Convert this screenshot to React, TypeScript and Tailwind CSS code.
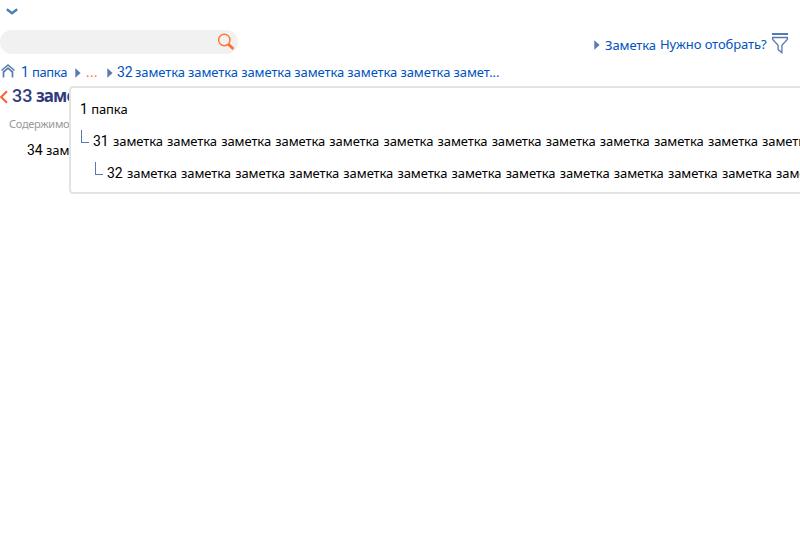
import React from "react";

const words = (n: number) => Array(n).fill("заметка").join(" ");

function Num({ children }: { children: React.ReactNode }) {
  return <span className="font-['Roboto',sans-serif] text-[14px] leading-[14px] tracking-normal">{children}</span>;
}

function Arrow() {
  return (
    <svg className="block shrink-0" width="6" height="10" viewBox="0 0 6 10">
      <path d="M0.3 0.3v9.4L5.6 5z" fill="#587ab0" />
    </svg>
  );
}

function Branch() {
  return <span className="mb-[9px] block h-[13px] w-[8px] shrink-0 border-b border-l border-[#587ab0]" />;
}

export default function App() {
  return (
    <div className="relative h-[550px] w-[800px] overflow-hidden bg-white font-['Noto_Sans',sans-serif] text-[13px] tracking-[-0.1px] whitespace-nowrap text-black">
      <div className="flex h-[30px] pt-[8px] pl-[6px]">
        <svg width="12" height="7" viewBox="0 0 12 7" fill="none">
          <path d="M0.8 1.2L6 5.3l5.2-4.1" stroke="#4a7fb8" strokeWidth="2.4" />
        </svg>
      </div>

      <div className="flex h-[32px] justify-between">
        <div className="flex h-[24px] w-[238px] items-start justify-end rounded-full bg-[#f1f1f1] pt-[3px] pr-[3px]">
          <svg width="18" height="18" viewBox="0 0 18 18" fill="none" stroke="#ff6d38">
            <circle cx="7.3" cy="7" r="5.7" stroke="#ff7434" strokeWidth="1.4" />
            <path d="M11.2 11l5.2 5" strokeWidth="2.8" />
          </svg>
        </div>
        <div className="flex h-[30px] items-center pr-[12px] text-[#0053bf]">
          <Arrow />
          <span className="relative top-px ml-[5px] w-[55px]">Заметка</span>
          <span className="w-[112px]">Нужно отобрать?</span>
          <svg className="-mt-[3px] shrink-0" width="16" height="21" viewBox="0 0 16 21" fill="none" stroke="#587ab0">
            <path d="M0 1h16" strokeWidth="2" />
            <path d="M0 4.5h16M0.7 5v1.5l5.4 5.7v4.4l3.8 3v-7.4l5.4-5.7V5" strokeWidth="1.3" />
          </svg>
        </div>
      </div>

      <div className="flex h-[21px] items-center text-[#0053bf]">
        <svg className="-mt-[4px] ml-px shrink-0" width="14" height="14" viewBox="0 0 14 14" fill="none" stroke="#587ab0" strokeWidth="1.5">
          <path d="M0.5 6.5L7 1l6.5 5.5" />
          <path d="M2.5 13.5V8L7 4.2 11.5 8v5.5" strokeWidth="1.7" />
        </svg>
        <span className="ml-[6px] w-[54px] tracking-[-0.35px]"><Num>1</Num> папка</span>
        <Arrow />
        <span className="ml-[5px] w-[21px] tracking-[0.5px] text-[#ff6d38]">...</span>
        <Arrow />
        <span className="ml-[4px]"><Num>32</Num><span className="-ml-px"> {words(6)} замет...</span></span>
      </div>

      <div className="flex h-[28px] items-center text-[#313c7e]">
        <svg className="-mt-px shrink-0" width="8" height="14" viewBox="0 0 8 14" fill="none">
          <path d="M7 1.2L1.2 7 7 12.8" stroke="#ff6036" strokeWidth="2" />
        </svg>
        <h1 className="-mt-[3px] ml-[4px] flex items-baseline text-[17px] font-bold tracking-[-0.9px]">
          <span className="font-['Roboto',sans-serif] text-[18px] font-medium tracking-normal">33</span>&nbsp;заметка
        </h1>
      </div>
      <div className="flex h-[26px] items-center pl-[9px] text-[11px] tracking-[-0.28px] text-[#999]">Содержимое</div>
      <div className="flex h-[26px] items-baseline pt-[5px] pl-[27px] leading-[16px]"><Num>34</Num>&nbsp;заметка</div>

      <div className="absolute top-[86px] left-[69px] h-[108px] w-[900px] rounded-[4px] border-2 border-[#e3e3e3] bg-white pt-[5px] pl-[9px]">
        <div className="flex h-[32px] items-center pt-px"><span><Num>1</Num> папка</span></div>
        <div className="flex h-[32px] items-center pl-px">
          <Branch />
          <span className="mt-[2px] ml-[4px] [word-spacing:1px]"><Num>31</Num> {words(16)}</span>
        </div>
        <div className="flex h-[32px] items-center pl-[15px]">
          <Branch />
          <span className="mt-[2px] ml-[4px] [word-spacing:1px]"><Num>32</Num> {words(16)}</span>
        </div>
      </div>
    </div>
  );
}
